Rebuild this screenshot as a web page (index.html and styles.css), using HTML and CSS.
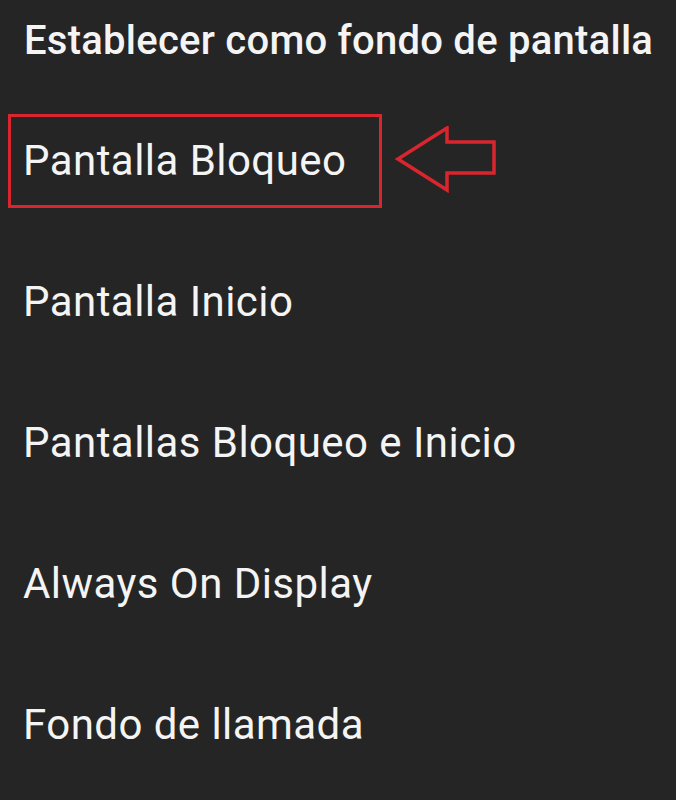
FILE: index.html
```html
<!DOCTYPE html>
<html lang="es">

<head>
    <meta charset="UTF-8">
    <meta name="viewport" content="width=device-width, initial-scale=1.0">
    <title>Establecer como fondo de pantalla</title>
    <link rel="stylesheet" href="styles.css">
</head>

<body>
    <div class="sheet">
        <div class="sheet_title">Establecer como fondo de pantalla</div>
        <ul class="option_list">
            <li class="option_item">
                <span class="mark_box">Pantalla Bloqueo</span>
                <!-- flecha roja -->
                <svg class="mark_arrow" width="104" height="70" viewBox="0 0 104 70">
                    <path d="M3 33 L52 2 L52 16 L99 16 L99 47 L52 47 L52 64 Z" fill="none" stroke="#d9262e" stroke-width="3.5" stroke-linejoin="miter" />
                </svg>
            </li>
            <li class="option_item">Pantalla Inicio</li>
            <li class="option_item">Pantallas Bloqueo e Inicio</li>
            <li class="option_item">Always On Display</li>
            <li class="option_item">Fondo de llamada</li>
        </ul>
    </div>
</body>

</html>
```

FILE: styles.css
```css
body {
    margin: 0;
    padding: 0;
    background-color: #252525;
}

.sheet {
    font-family: Roboto, "Noto Sans", sans-serif;
    color: #f4f4f4;
    width: 676px;
    height: 800px;
}

.sheet_title {
    height: 90px;
    padding-left: 24px;
    display: flex;
    align-items: center;
    font-size: 40px;
    font-weight: 500;
    letter-spacing: 0.25px;
    padding-bottom: 10px;
    box-sizing: border-box;
}

.option_list {
    list-style: none;
    margin: 0;
    padding: 0;
}

.option_item {
    height: 141px;
    padding-left: 23px;
    display: flex;
    align-items: center;
    font-size: 42px;
    letter-spacing: 0.45px;
}

.option_item:first-child {
    padding-left: 8px;
}

.mark_box {
    display: flex;
    align-items: center;
    box-sizing: border-box;
    width: 374px;
    height: 94px;
    padding-left: 12px;
    border: 3.5px solid #d9262e;
}

.mark_arrow {
    margin-left: 13px;
}
```
